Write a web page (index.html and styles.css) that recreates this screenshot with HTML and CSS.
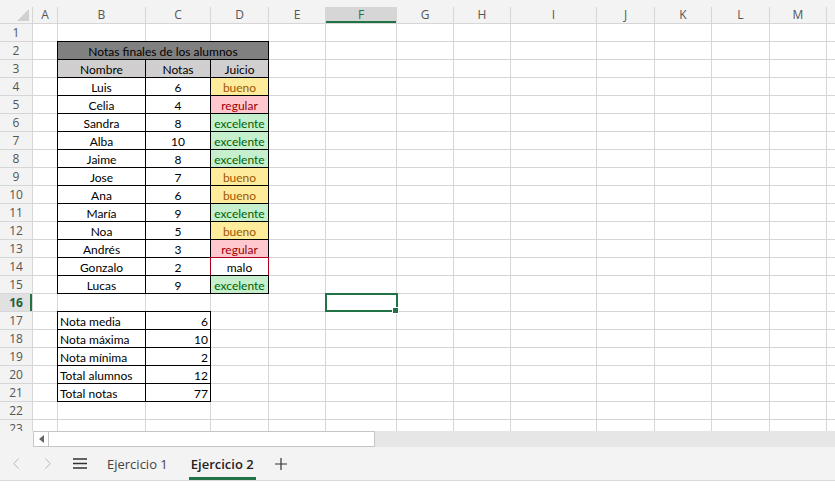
FILE: index.html
```html
<!DOCTYPE html>
<html lang="es">

<head>
  <meta charset="UTF-8">
  <meta name="viewport" content="width=device-width, initial-scale=1.0">
  <title>Ejercicio 2</title>
  <link rel="stylesheet" href="styles.css">
</head>

<body>
  <div class="sheet">
    <div class="top-strip"></div>
    <div class="grid" id="grid"></div>
    <div class="hscroll">
      <div class="hscroll-gap"></div>
      <div class="hscroll-box">
        <span class="hscroll-btn"><span class="tri"></span></span>
      </div>
    </div>
    <div class="tabs">
      <span class="nav-btn">
        <svg width="6" height="11" viewBox="0 0 6 11"><path d="M5.5 0.5 L0.8 5.5 L5.5 10.5" fill="none" stroke="#b8b8b8" stroke-width="1"/></svg>
      </span>
      <span class="nav-btn">
        <svg width="6" height="11" viewBox="0 0 6 11"><path d="M0.5 0.5 L5.2 5.5 L0.5 10.5" fill="none" stroke="#b8b8b8" stroke-width="1"/></svg>
      </span>
      <span class="menu-btn">
        <svg width="14" height="11" viewBox="0 0 14 11"><path d="M0 1h14M0 5.5h14M0 10h14" stroke="#333" stroke-width="1.3"/></svg>
      </span>
      <span class="tab">Ejercicio 1</span>
      <span class="tab active">Ejercicio 2</span>
      <span class="add-btn">
        <svg width="12" height="12" viewBox="0 0 12 12"><path d="M6 0v12M0 6h12" stroke="#333" stroke-width="1.2"/></svg>
      </span>
    </div>
  </div>

  <script>
    var letters = ['', 'A', 'B', 'C', 'D', 'E', 'F', 'G', 'H', 'I', 'J', 'K', 'L', 'M', '']
    var alumnos = [
      ['Luis', 6, 'bueno'],
      ['Celia', 4, 'regular'],
      ['Sandra', 8, 'excelente'],
      ['Alba', 10, 'excelente'],
      ['Jaime', 8, 'excelente'],
      ['Jose', 7, 'bueno'],
      ['Ana', 6, 'bueno'],
      ['María', 9, 'excelente'],
      ['Noa', 5, 'bueno'],
      ['Andrés', 3, 'regular'],
      ['Gonzalo', 2, 'malo'],
      ['Lucas', 9, 'excelente']
    ]
    var resumen = [
      ['Nota media', 6],
      ['Nota máxima', 10],
      ['Nota mínima', 2],
      ['Total alumnos', 12],
      ['Total notas', 77]
    ]

    var cells = {}
    cells.B2 = { t: 'Notas finales de los alumnos', cls: 'bd title', span: 3 }
    cells.B3 = { t: 'Nombre', cls: 'bd head' }
    cells.C3 = { t: 'Notas', cls: 'bd head' }
    cells.D3 = { t: 'Juicio', cls: 'bd head' }
    alumnos.forEach(function (a, i) {
      var r = i + 4
      cells['B' + r] = { t: a[0], cls: 'bd mid' }
      cells['C' + r] = { t: a[1], cls: 'bd mid' }
      cells['D' + r] = { t: a[2], cls: 'mid ' + a[2] + (a[2] == 'malo' ? '' : ' bd') }
    })
    resumen.forEach(function (a, i) {
      var r = i + 17
      cells['B' + r] = { t: a[0], cls: 'bd left' }
      cells['C' + r] = { t: a[1], cls: 'bd right' }
    })

    var grid = document.getElementById('grid')
    function add(cls, text, span) {
      var d = document.createElement('div')
      d.className = cls
      if (text !== undefined) d.textContent = text
      if (span) d.style.gridColumn = 'span ' + span
      grid.appendChild(d)
    }

    letters.forEach(function (l, i) {
      if (i == 0) add('corner', '')
      else add('ch' + (l == 'F' ? ' ch-sel' : ''), l)
    })
    for (var r = 1; r <= 23; r++) {
      add('rh' + (r == 16 ? ' rh-sel' : ''), r)
      for (var c = 1; c < letters.length; c++) {
        var key = letters[c] + r
        var cell = cells[key]
        if (cell) {
          add('c ' + cell.cls, cell.t, cell.span)
          if (cell.span) c += cell.span - 1
        } else {
          add('c' + (key == 'F16' ? ' sel' : ''))
        }
      }
    }
  </script>
</body>

</html>
```

FILE: styles.css
```css
* {
  margin: 0px;
  padding: 0px;
  box-sizing: border-box;
}
body {
  background: #fff;
  overflow: hidden;
}
.sheet {
  width: 835px;
  height: 488px;
  background: #fff;
}
.top-strip {
  height: 7px;
  background: #f3f3f3;
}
.grid {
  display: grid;
  grid-template-columns: 32px 24px 87px 64px 57px 56px 70px 56px 56px 85px 57px 56px 57px 56px 1fr;
  grid-template-rows: 16px;
  grid-auto-rows: 17px;
  gap: 1px;
  background: #d6d6d6;
  height: 424px;
  overflow: hidden;
}
.corner {
  background: #f3f3f3;
  position: relative;
}
.corner::after {
  content: "";
  position: absolute;
  right: 3px;
  bottom: 2px;
  border-style: solid;
  border-width: 0 0 12px 12px;
  border-color: transparent transparent #d0d0d0 transparent;
}
.ch {
  background: #f3f3f3;
  color: #555;
  font-family: "Open Sans", sans-serif;
  font-size: 12px;
  line-height: 16px;
  text-align: center;
}
.ch-sel {
  background: #d6d6d6;
  color: #217346;
  box-shadow: inset 0 -2px 0 #217346;
}
.rh {
  background: #f3f3f3;
  color: #555;
  font-family: "Open Sans", sans-serif;
  font-size: 12px;
  line-height: 17px;
  text-align: center;
}
.rh-sel {
  background: #e1e1e1;
  color: #215f3c;
  font-weight: bold;
  box-shadow: inset -2px 0 0 #217346;
}
.c {
  background: #fff;
  font-family: "Lato", sans-serif;
  font-size: 12px;
  line-height: 17px;
  padding-top: 1px;
  color: #000;
  white-space: nowrap;
  overflow: visible;
}
.bd {
  box-shadow: 0 0 0 1px #000;
}
.title {
  background: #808080;
  text-align: center;
}
.head {
  background: #d0cece;
  text-align: center;
}
.mid {
  text-align: center;
}
.left {
  padding-left: 2px;
}
.right {
  text-align: right;
  padding-right: 2px;
}
.bueno {
  background: #ffeb9c;
  color: #9c5700;
}
.regular {
  background: #ffc7ce;
  color: #9c0006;
}
.excelente {
  background: #c6efce;
  color: #006100;
}
.malo {
  box-shadow: 0 0 0 1px #b00020;
}
.sel {
  position: relative;
}
.sel::before {
  content: "";
  position: absolute;
  left: -1px;
  top: -1px;
  right: -2px;
  bottom: -1px;
  border: 2px solid #217346;
}
.sel::after {
  content: "";
  position: absolute;
  right: -3px;
  bottom: -3px;
  width: 5px;
  height: 5px;
  background: #217346;
  border: 1px solid #fff;
}

.hscroll {
  height: 16px;
  display: flex;
  background: #e6e6e6;
}
.hscroll-gap {
  width: 33px;
  background: #f3f3f3;
}
.hscroll-box {
  width: 342px;
  background: #fff;
  border: 1px solid #c6c6c6;
  display: flex;
}
.hscroll-btn {
  width: 15px;
  border-right: 1px solid #c6c6c6;
  display: flex;
  align-items: center;
  justify-content: center;
}
.tri {
  border-style: solid;
  border-width: 4px 5px 4px 0;
  border-color: transparent #666 transparent transparent;
}

.tabs {
  height: 34px;
  background: #f3f3f3;
  border-bottom: 1px solid #dadada;
  display: flex;
  align-items: center;
  font-family: "Open Sans", sans-serif;
  font-size: 13px;
}
.nav-btn {
  width: 32px;
  display: flex;
  justify-content: center;
}
.menu-btn {
  margin-left: 9px;
  display: flex;
}
.tab {
  position: relative;
  height: 100%;
  display: flex;
  align-items: center;
  padding: 0 2px;
  margin-left: 18px;
  color: #444;
}
.tab.active {
  color: #222;
  font-weight: 600;
  margin-left: 19px;
}
.tab.active::after {
  content: "";
  position: absolute;
  left: 0;
  right: 0;
  bottom: 0;
  height: 3px;
  background: #217346;
}
.add-btn {
  margin-left: 19px;
  display: flex;
}
```
